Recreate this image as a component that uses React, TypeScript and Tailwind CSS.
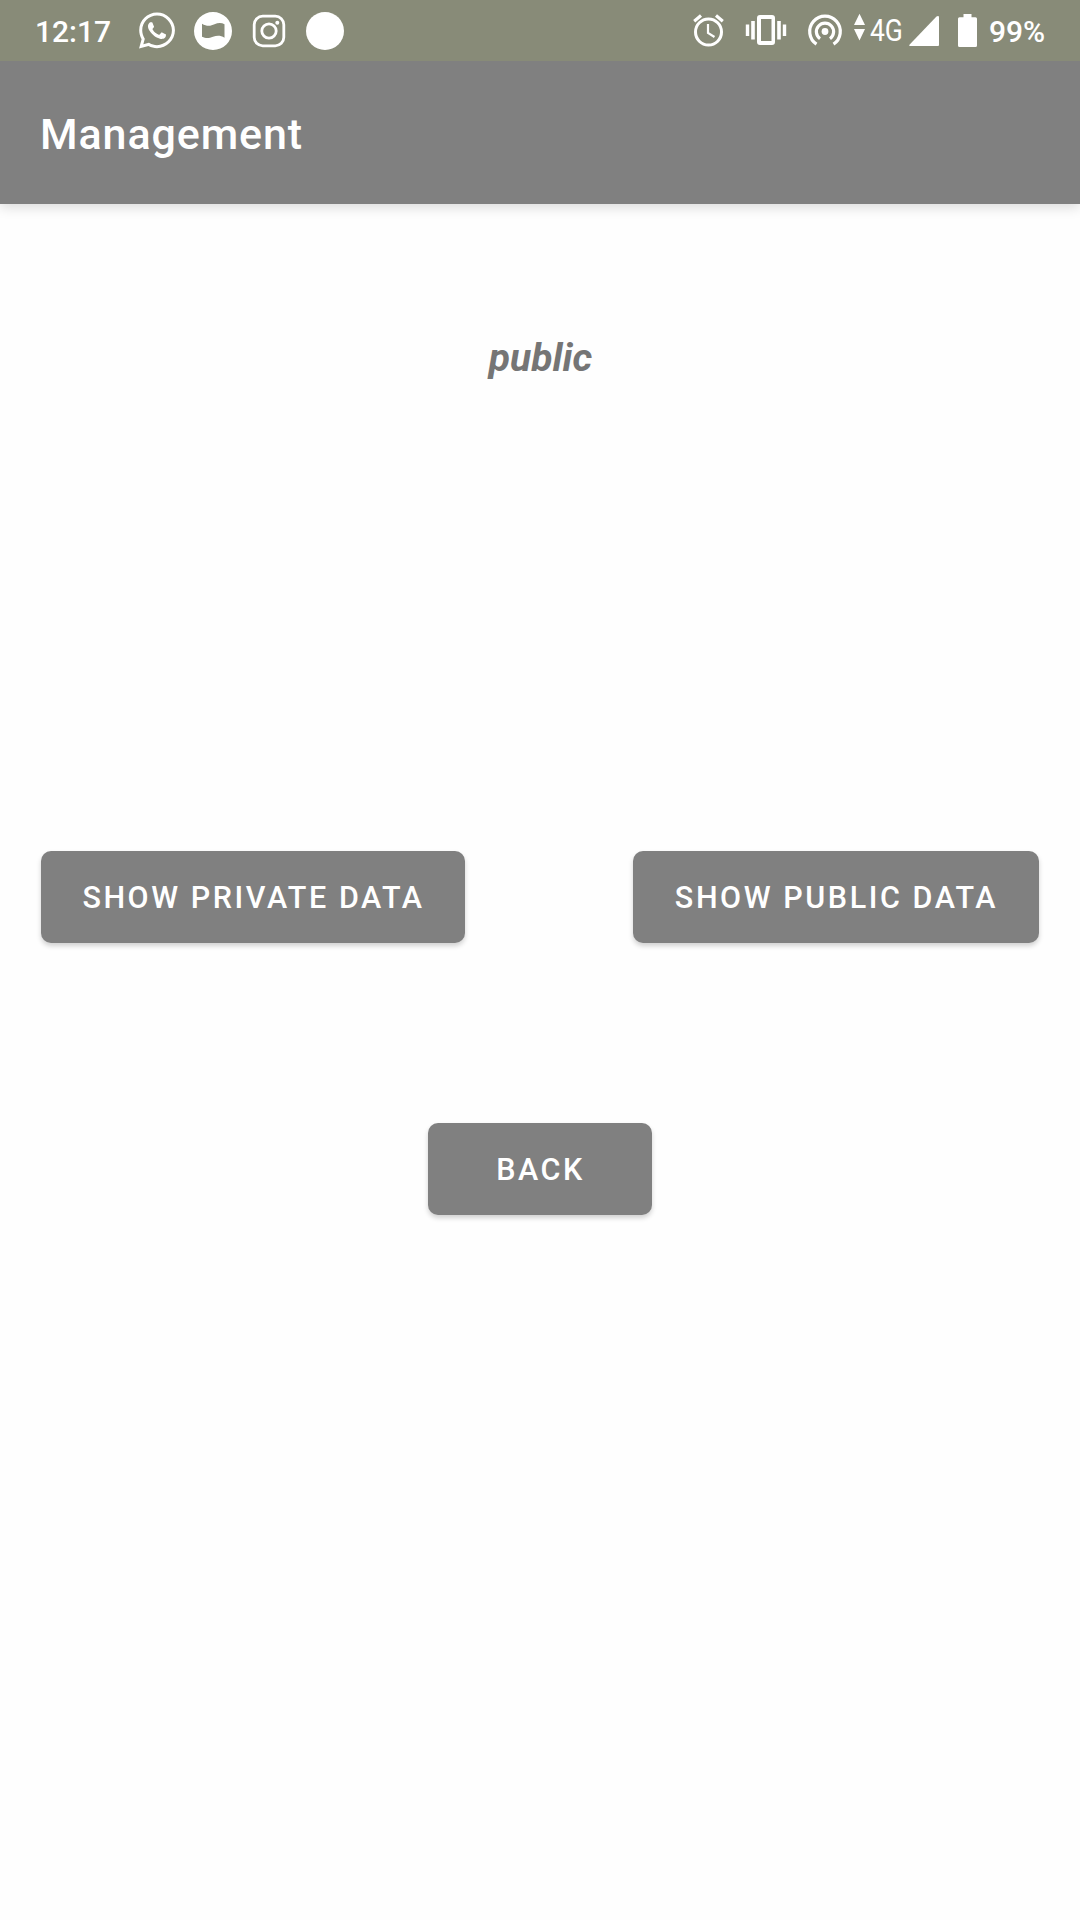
import type { ReactNode } from "react";
import { FaWhatsapp } from "react-icons/fa";

function LeftIcons() {
  return (
    <div className="flex items-center">
      <FaWhatsapp className="ml-[29px] h-[41px] w-[36px]" />
      <svg className="ml-[19px] size-[38px]" viewBox="0 0 38 38" fill="currentColor">
        <path
          fillRule="evenodd"
          d="M19 0a19 19 0 1 1 0 38a19 19 0 1 1 0-38ZM8 11.800C13 14.900 17 14 20.500 12.300C24 10.700 27.500 10.500 30.500 12.300V25.700C26.500 23.200 23 23.300 19 24.800C15 26.300 12 26.600 8 24.800Z"
        />
      </svg>
      <svg
        className="ml-[20px] size-[34px]"
        viewBox="0 0 34 34"
        fill="none"
        stroke="currentColor"
        strokeWidth="2.800"
      >
        <rect x="2.200" y="2.200" width="29.600" height="29.600" rx="8.500" />
        <circle cx="17" cy="17" r="7.200" />
        <circle cx="25.300" cy="8.800" r="2" fill="currentColor" stroke="none" />
      </svg>
      <div className="ml-[20px] size-[38px] rounded-full bg-white" />
    </div>
  );
}

function RightIcons() {
  return (
    <div className="flex items-center">
      <svg className="h-[61px] w-[34px]" viewBox="691 0 34 61" fill="none" stroke="currentColor">
        <circle cx="708.500" cy="32" r="13" strokeWidth="3" />
        <path d="M708 24V33L714.500 37" strokeWidth="2.200" />
        <path d="M694.200 21.200L701 15.600M722.800 21.200L716 15.600" strokeWidth="3.200" />
      </svg>
      <svg className="ml-[19px] h-[61px] w-[44px]" viewBox="744 0 44 61" fill="currentColor">
        <path
          fillRule="evenodd"
          d="M760 15h12q3 0 3 3v24q0 3-3 3h-12q-3 0-3-3V18q0-3 3-3ZM761 19V41H771.500V19Z"
        />
        <path d="M745.800 24.500h3.400v11.500h-3.400zM751.200 21h3.600v18.500h-3.600zM777.200 21h3.600v18.500h-3.600zM782.800 24.500h3.400v11.500h-3.400z" />
      </svg>
      <svg
        className="ml-[19px] h-[61px] w-[36px]"
        viewBox="807 0 36 61"
        fill="none"
        stroke="currentColor"
        strokeWidth="3.200"
      >
        <circle cx="825" cy="31.500" r="3.400" fill="currentColor" stroke="none" />
        <path d="M820 38.700A8.600 8.600 0 1 1 830 38.700" />
        <path d="M816.500 44.200A15.300 15.300 0 1 1 833.500 44.200" />
      </svg>
      <svg className="ml-[11px] h-[61px] w-[12px]" viewBox="854 0 12 61" fill="currentColor">
        <path d="M859.500 13.800L865 25H854ZM854 29H865L859.500 40.500Z" />
      </svg>
      <span className="ml-[4px] w-[39px] origin-left scale-x-[0.840] pt-px text-[31.500px] leading-[60px] font-normal">
        4G
      </span>
      <svg className="h-[61px] w-[30px]" viewBox="909 0 30 61" fill="currentColor">
        <path d="M938 16q1 0 1 1.200V45q0 1-1 1H910.500q-2 0-.8-1.600L936.500 16.600Q937.200 16 938 16Z" />
      </svg>
      <svg className="ml-[19px] h-[61px] w-[19px]" viewBox="958 0 19 61" fill="currentColor">
        <path d="M963.500 14h8v3.300h4q1.500 0 1.500 1.500V45.500q0 1.500-1.500 1.500h-16q-1.500 0-1.500-1.500V18.800q0-1.500 1.500-1.500h4z" />
      </svg>
    </div>
  );
}

function StatusBar() {
  return (
    <div className="z-10 flex h-[61px] items-center bg-[#888b78] pr-[35px] pl-[35px] text-[30px] font-medium text-white">
      <span className="w-[75px] pt-[2px] whitespace-nowrap">12:17</span>
      <LeftIcons />
      <div className="flex-1" />
      <RightIcons />
      <span className="ml-[12px] w-[56px] pt-[2px] whitespace-nowrap">99%</span>
    </div>
  );
}

function Button({ className, children }: { className: string; children: ReactNode }) {
  return (
    <button
      className={`flex h-[92px] items-center justify-center rounded-[10px] bg-[#808080] pt-[2px] pl-px text-[30.500px] font-medium tracking-[2.570px] whitespace-nowrap text-white shadow-[0_3px_5px_rgba(0,0,0,0.180)] ${className}`}
    >
      {children}
    </button>
  );
}

export default function App() {
  return (
    <div className="flex h-[1920px] w-[1080px] flex-col bg-[#fefefe] font-['Roboto',sans-serif]">
      <StatusBar />
      <header className="flex h-[143px] items-center bg-[#808080] px-[40px] pt-[3px] shadow-[0_3px_12px_rgba(0,0,0,0.150)]">
        <h1 className="text-[43px] leading-none font-medium tracking-[0.900px] text-white">Management</h1>
      </header>
      <main className="flex flex-col items-center">
        <p className="mt-[130px] h-[48px] pl-px text-[39px] leading-[48px] font-bold text-[#757575] italic">public</p>
        <div className="mt-[469px] flex w-full justify-between px-[41px]">
          <Button className="w-[424px]">SHOW PRIVATE DATA</Button>
          <Button className="w-[406px]">SHOW PUBLIC DATA</Button>
        </div>
        <Button className="mt-[180px] w-[224px]">BACK</Button>
      </main>
    </div>
  );
}
